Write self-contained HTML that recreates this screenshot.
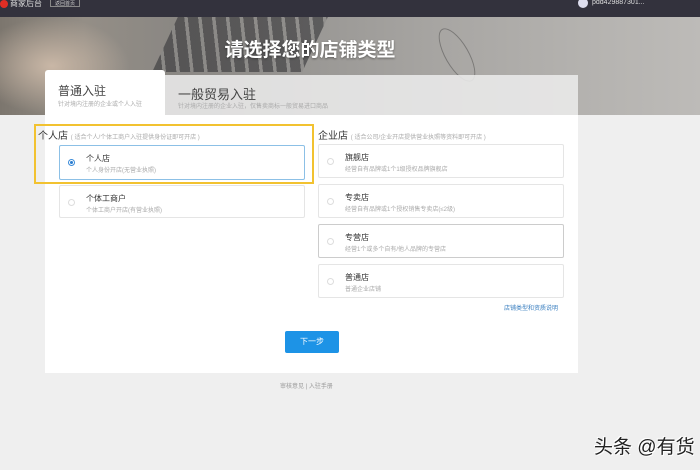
<!DOCTYPE html>
<html><head><meta charset="utf-8"><style>
*{margin:0;padding:0;box-sizing:border-box}
body{width:700px;height:470px;overflow:hidden;background:#efefef;font-family:"Liberation Sans","Noto Sans CJK SC",sans-serif;position:relative}
.a{position:absolute}
.top{left:0;top:0;width:700px;height:17px;background:#33323d}
.banner{left:0;top:17px;width:700px;height:98px;background:linear-gradient(90deg,#7c766e 0%,#948e86 12%,#8a8783 25%,#9a9895 45%,#a9a7a4 65%,#b5b3b0 85%,#bdbbb8 100%)}
.kb{left:165px;top:17px;width:150px;height:55px;background:repeating-linear-gradient(60deg,#333336 0 9px,#8a8987 9px 12px);transform:skewX(-25deg);opacity:.6}
.title{left:0;top:35px;width:620px;text-align:center;color:#fff;font-size:19px;font-weight:bold;text-shadow:0 1px 2px rgba(0,0,0,.4)}
.card{left:45px;top:115px;width:533px;height:258px;background:#fff}
.tab1{left:45px;top:70px;width:120px;height:46px;background:#fff;border-radius:3px 3px 0 0}
.tab2{left:165px;top:75px;width:413px;height:40px;background:rgba(235,235,235,.88)}
.tt{font-size:12px;color:#444}
.ts{font-size:6px;color:#aaa}
.h{font-size:10px;color:#333}
.h span{font-size:6px;color:#aaa}
.opt{border:1px solid #e5e5e5;background:#fff;border-radius:2px}
.opt b{position:absolute;left:26px;top:7px;font-size:8px;font-weight:normal;color:#333}
.opt i{position:absolute;left:26px;top:19px;font-size:6px;font-style:normal;color:#aaa}
.opt u{position:absolute;left:8px;top:13px;width:7px;height:7px;border:1px solid #ddd;border-radius:50%}
</style></head><body>
<div class="a top"></div>
<div class="a" style="left:0;top:0;width:8px;height:8px;background:#e02e24;border-radius:50%"></div>
<div class="a" style="left:10px;top:-2px;font-size:8px;color:#ddd">商家后台</div>
<div class="a" style="left:50px;top:-1px;width:30px;height:8px;border:1px solid #888;font-size:5px;color:#ccc;text-align:center">返回首页</div>
<div class="a" style="left:578px;top:-2px;width:10px;height:10px;background:#dde;border-radius:50%"></div>
<div class="a" style="left:592px;top:-1px;font-size:7px;color:#ddd">pdd429887301...</div>
<div class="a banner"></div>
<div class="a kb"></div>
<div class="a" style="left:0;top:17px;width:130px;height:98px;background:radial-gradient(ellipse at 40% 50%,#c9b7a6 0,rgba(120,110,100,0) 70%)"></div>
<div class="a" style="left:445px;top:25px;width:24px;height:60px;border:1px solid #333;border-radius:50%;opacity:.4;transform:rotate(-30deg)"></div>
<div class="a title">请选择您的店铺类型</div>
<div class="a card"></div>
<div class="a tab2"></div>
<div class="a tab1"></div>
<div class="a tt" style="left:58px;top:82px">普通入驻</div>
<div class="a ts" style="left:58px;top:99px">针对境内注册的企业或个人入驻</div>
<div class="a tt" style="left:178px;top:84px;font-size:13px">一般贸易入驻</div>
<div class="a ts" style="left:178px;top:101px">针对境内注册的企业入驻，仅售卖商标一般贸易进口商品</div>

<div class="a h" style="left:38px;top:127px">个人店 <span>( 适合个人/个体工商户入驻提供身份证即可开店 )</span></div>
<div class="a opt" style="left:59px;top:145px;width:246px;height:35px;border-color:#8cc0e6"><u style="border-color:#3b8bd9;background:radial-gradient(circle,#2f7fd0 0 40%,#fff 45%)"></u><b>个人店</b><i>个人身份开店(无营业执照)</i></div>
<div class="a opt" style="left:59px;top:185px;width:246px;height:33px"><u></u><b>个体工商户</b><i>个体工商户开店(有营业执照)</i></div>
<div class="a" style="left:34px;top:124px;width:280px;height:60px;border:2px solid #f2c230"></div>

<div class="a h" style="left:318px;top:127px">企业店 <span>( 适合公司/企业开店提供营业执照等资料即可开店 )</span></div>
<div class="a opt" style="left:318px;top:144px;width:246px;height:34px"><u></u><b>旗舰店</b><i>经营自有品牌或1个1级授权品牌旗舰店</i></div>
<div class="a opt" style="left:318px;top:184px;width:246px;height:34px"><u></u><b>专卖店</b><i>经营自有品牌或1个授权销售专卖店(≤2级)</i></div>
<div class="a opt" style="left:318px;top:224px;width:246px;height:34px;border-color:#ccc"><u></u><b>专营店</b><i>经营1个或多个自有/他人品牌的专营店</i></div>
<div class="a opt" style="left:318px;top:264px;width:246px;height:34px"><u></u><b>普通店</b><i>普通企业店铺</i></div>
<div class="a" style="left:504px;top:303px;font-size:6px;color:#3a7fc0">店铺类型和资质说明</div>
<div class="a" style="left:285px;top:331px;width:54px;height:22px;background:#1d93e6;border-radius:2px;color:#fff;font-size:8px;text-align:center;line-height:22px">下一步</div>
<div class="a" style="left:280px;top:381px;font-size:6px;color:#999">审核意见 | 入驻手册</div>
<div class="a" style="left:594px;top:432px;font-size:19px;color:#222;text-shadow:1px 1px 0 #fff,-1px -1px 0 #fff;white-space:nowrap">头条 @有货</div>
</body></html>
